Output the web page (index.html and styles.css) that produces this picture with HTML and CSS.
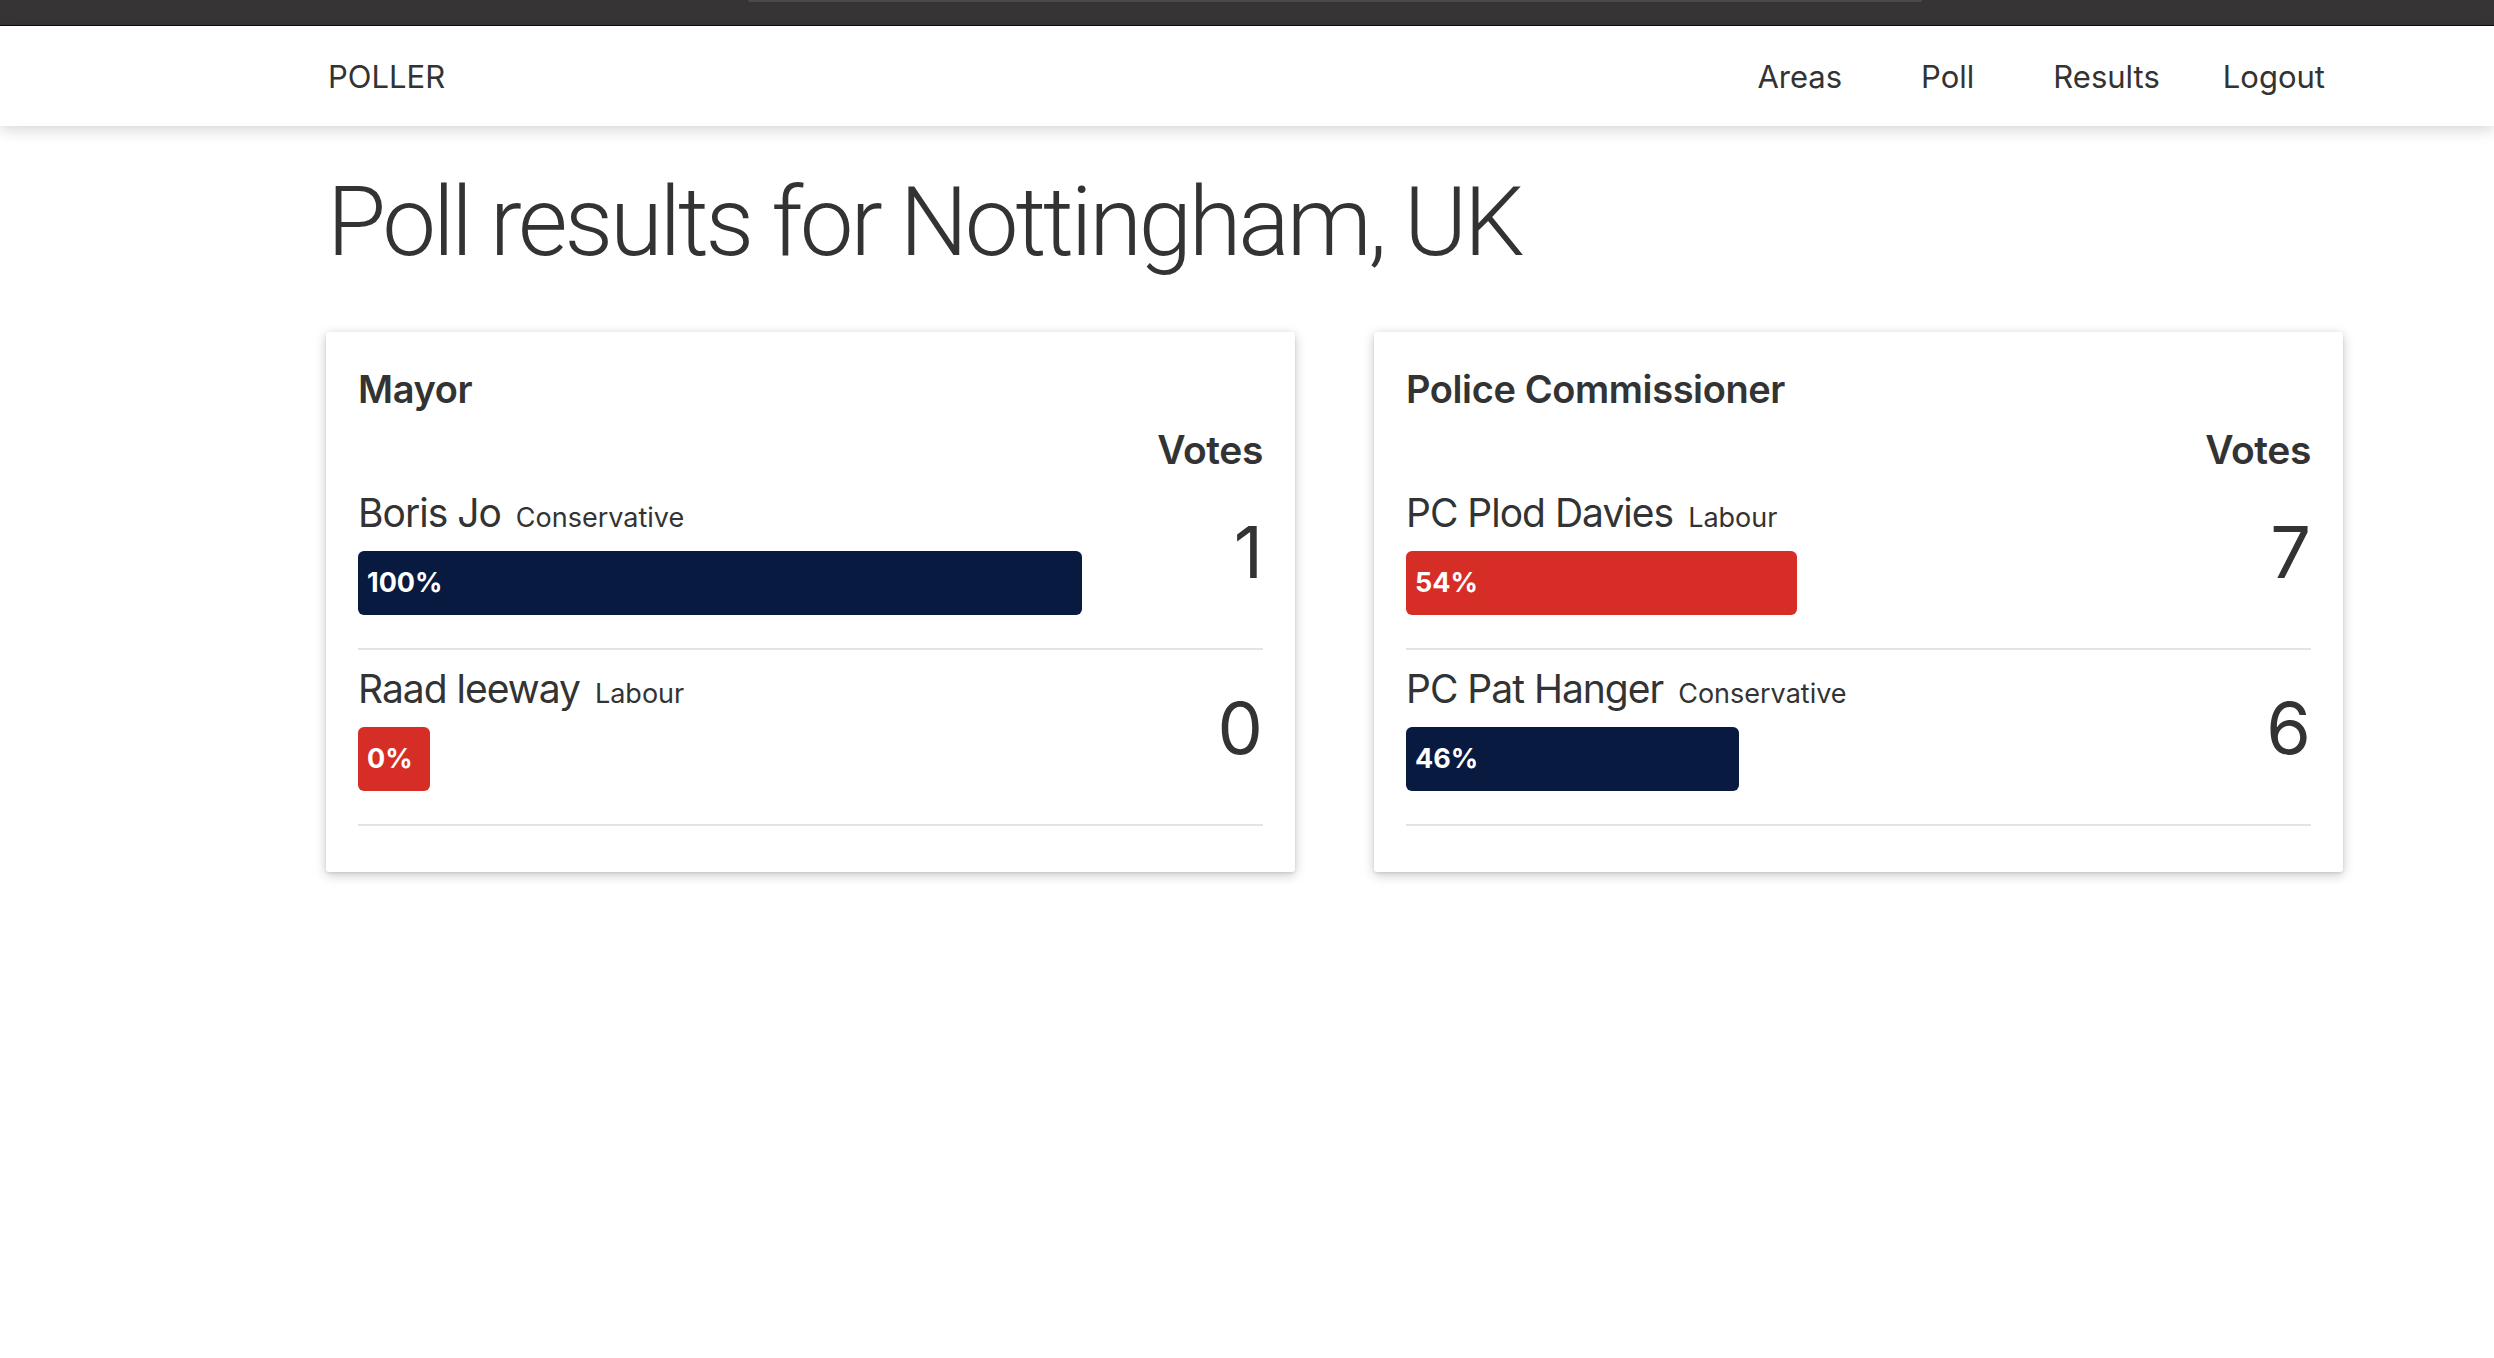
FILE: index.html
```html
<!DOCTYPE html>
<html lang="en">
<head>
<meta charset="utf-8">
<title>Poller - Results</title>
<link rel="stylesheet" href="styles.css">
</head>
<body>
<div class="chrome"><div class="chrome-tab"></div></div>
<nav class="navbar">
  <div class="nav-inner">
    <a class="brand" href="#">POLLER</a>
    <ul class="nav-links">
      <li><a href="#">Areas</a></li>
      <li><a href="#">Poll</a></li>
      <li><a href="#">Results</a></li>
      <li class="logout"><a href="#">Logout</a></li>
    </ul>
  </div>
</nav>
<main class="container">
  <h1 class="page-title">Poll results for Nottingham, UK</h1>
  <div class="cards">
    <section class="card">
      <h2 class="card-title">Mayor</h2>
      <div class="votes-head">Votes</div>
      <div class="result-row">
        <div class="cand">
          <div class="cand-line"><span class="cand-name">Boris Jo</span><span class="party">Conservative</span></div>
          <div class="bar-track"><div class="bar bar-con" style="width:100%">100%</div></div>
        </div>
        <div class="votes">1</div>
      </div>
      <div class="result-row">
        <div class="cand">
          <div class="cand-line"><span class="cand-name">Raad leeway</span><span class="party">Labour</span></div>
          <div class="bar-track"><div class="bar bar-lab" style="width:0%">0%</div></div>
        </div>
        <div class="votes">0</div>
      </div>
    </section>
    <section class="card">
      <h2 class="card-title">Police Commissioner</h2>
      <div class="votes-head">Votes</div>
      <div class="result-row">
        <div class="cand">
          <div class="cand-line"><span class="cand-name">PC Plod Davies</span><span class="party">Labour</span></div>
          <div class="bar-track"><div class="bar bar-lab" style="width:54%">54%</div></div>
        </div>
        <div class="votes">7</div>
      </div>
      <div class="result-row">
        <div class="cand">
          <div class="cand-line"><span class="cand-name">PC Pat Hanger</span><span class="party">Conservative</span></div>
          <div class="bar-track"><div class="bar bar-con" style="width:46%">46%</div></div>
        </div>
        <div class="votes">6</div>
      </div>
    </section>
  </div>
</main>
</body>
</html>
```

FILE: styles.css
```css
html, body {
  margin: 0;
  padding: 0;
  background: #ffffff;
}
body {
  font-family: Inter, "Noto Sans", "Liberation Sans", sans-serif;
  color: #333333;
}
.chrome {
  height: 25px;
  background: #363435;
  border-bottom: 1px solid #0e0e0e;
}
.chrome-tab {
  margin-left: 748px;
  width: 1174px;
  height: 2px;
  background: #4c4a4b;
  border-radius: 0 0 3px 3px;
}
.navbar {
  height: 100px;
  background: #ffffff;
  box-shadow: 0 4px 14px rgba(0, 0, 0, 0.16);
  position: relative;
  z-index: 1;
}
.nav-inner {
  margin-left: 326px;
  width: 1999px;
  height: 100%;
  display: flex;
  align-items: center;
  justify-content: space-between;
}
.brand {
  color: #333333;
  text-decoration: none;
  font-size: 31px;
  padding-left: 2px;
}
.nav-links {
  list-style: none;
  margin: 0;
  padding: 0;
  display: flex;
  gap: 79px;
}
.nav-links a {
  color: #333333;
  text-decoration: none;
  font-size: 31px;
}
.nav-links .logout {
  margin-left: -16px;
}
.container {
  margin-left: 326px;
  width: 2017px;
  padding-bottom: 40px;
}
.page-title {
  margin: 40px 0 53px;
  font-family: Roboto, Inter, "Liberation Sans", sans-serif;
  font-size: 96px;
  font-weight: 300;
  line-height: 113px;
  letter-spacing: -3.2px;
  padding-left: 1px;
}
.cards {
  display: grid;
  grid-template-columns: 1fr 1fr;
  gap: 79px;
  align-items: start;
}
.card {
  background: #ffffff;
  border-radius: 3px;
  box-shadow: 0 3px 12px rgba(0, 0, 0, 0.22), 0 1px 3px rgba(0, 0, 0, 0.1);
  padding: 34px 32px 46px 32px;
}
.card-title {
  margin: 0;
  font-size: 38px;
  font-weight: 600;
  line-height: 46px;
  letter-spacing: -0.4px;
}
.votes-head {
  margin-top: 14px;
  text-align: right;
  font-size: 39px;
  font-weight: 600;
  line-height: 48px;
  letter-spacing: -0.4px;
}
.result-row {
  display: grid;
  grid-template-columns: 80% 20%;
  align-items: center;
  padding: 15px 0 33px;
  border-bottom: 2px solid #e3e3e3;
}
.cand-line {
  line-height: 48px;
  height: 48px;
  white-space: nowrap;
}
.cand-name {
  font-size: 39px;
  letter-spacing: -1px;
}
.party {
  font-size: 27px;
  margin-left: 15px;
}
.bar-track {
  margin-top: 14px;
}
.bar {
  box-sizing: border-box;
  min-width: 72px;
  height: 64px;
  border-radius: 6px;
  padding-left: 9px;
  color: #ffffff;
  font-size: 27px;
  font-weight: 700;
  line-height: 64px;
  white-space: nowrap;
}
.bar-con {
  background: #081a40;
}
.bar-lab {
  background: #d62e26;
}
.votes {
  text-align: right;
  font-size: 72px;
  font-weight: 400;
  line-height: 80px;
}
```
